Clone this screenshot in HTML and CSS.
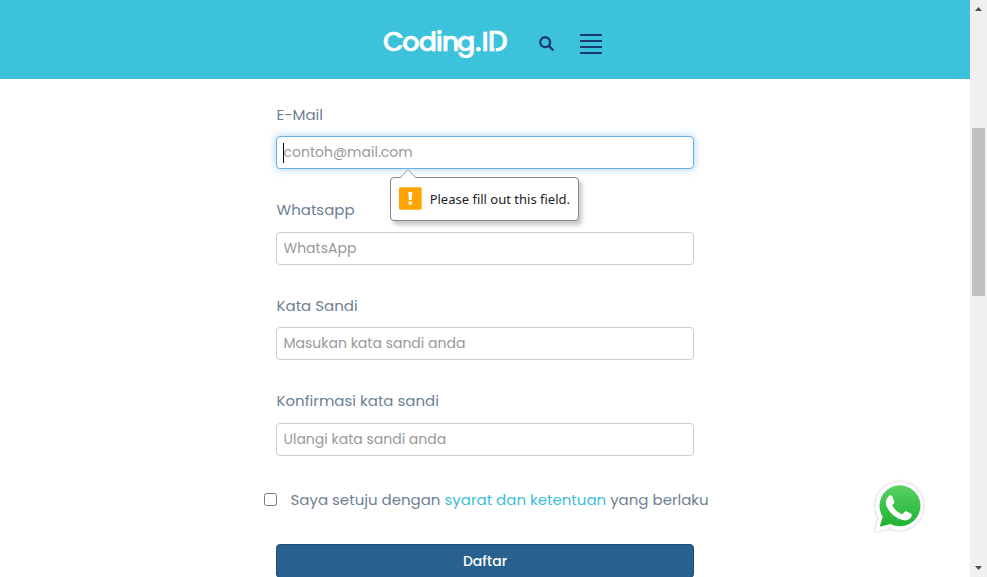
FILE: index.html
```html
<!DOCTYPE html>
<html lang="id">
<head>
<meta charset="utf-8">
<title>Coding.ID</title>
<link rel="stylesheet" href="styles.css">
</head>
<body>
<div class="window">
  <div class="page">
    <header class="header">
      <svg class="logo" width="126" height="34" viewBox="0 0 126 34"><text x="-1 18.300 34.800 51.700 57.800 73 91 97.500 103.800" y="24.700">Coding.I<tspan class="logo-d">D</tspan></text><path class="logo-cut" d="M111 20.500v5"/></svg>
      <svg class="search" width="16" height="16" viewBox="0 0 16 16"><circle cx="6.2" cy="6.2" r="4.9"/><path d="M10 10l4.3 4.3"/></svg>
      <div class="menu"><i></i><i></i><i></i><i></i></div>
    </header>
    <form class="form">
      <div class="field">
        <label for="email">E-Mail</label>
        <div class="control">
          <input id="email" class="active" placeholder="contoh@mail.com">
          <span class="caret"></span>
          <div class="tip">
            <svg class="tip-arrow" width="18" height="10" viewBox="0 0 18 10"><path d="M1 9.500L9 1l8 8.500V10H1z" fill="#fff"/><path d="M1 8.700L9 .7l8 8" fill="none" stroke="#999"/></svg>
            <svg width="23" height="23" viewBox="0 0 23 23"><rect width="23" height="23" rx="1.500" fill="#ffa400"/><path d="M9.500 5h4l-.5 8h-3zM9.700 14.500h3.600v3.200H9.700z" fill="#fff"/></svg>
            <span class="tip-text">Please fill out this field.</span>
          </div>
        </div>
      </div>
      <div class="field">
        <label for="wa">Whatsapp</label>
        <input id="wa" placeholder="WhatsApp">
      </div>
      <div class="field">
        <label for="pass">Kata Sandi</label>
        <input id="pass" placeholder="Masukan kata sandi anda">
      </div>
      <div class="field">
        <label for="confirm">Konfirmasi kata sandi</label>
        <input id="confirm" placeholder="Ulangi kata sandi anda">
      </div>
      <div class="terms"><input type="checkbox" class="check"><span>Saya setuju dengan <a>syarat dan ketentuan</a> yang berlaku</span></div>
      <button type="button" class="submit">Daftar</button>
    </form>
    <svg class="chat" width="56" height="56" viewBox="0 0 58 58">
      <defs><linearGradient id="green" x1="0" y1="0" x2="0" y2="1"><stop offset="0" stop-color="#58d163"/><stop offset="1" stop-color="#1eb232"/></linearGradient></defs>
      <path class="chat-edge" d="M3.500 55L8 41A25 25 0 1 1 19.500 51z"/>
      <path fill="url(#green)" d="M9 49.500L12 39A21.200 21.200 0 1 1 20 46.500z"/>
      <path fill="#fff" d="M18.500 17.500c1-.8 2.700-.9 3.300.2l2.300 5.400c.4 1-.1 1.900-2.200 4.200 2.600 4.600 6.200 7.600 10.600 9.300 2.100-2.500 2.800-3.500 3.900-3.100l5.300 2.600c.9.500.3 2.800-.4 3.900-1.500 2.300-5.100 3.500-8.200 2.500-8.300-2.100-13.300-7.100-16.600-13.400-1.900-4-1.400-8.600 2-11.600z"/>
    </svg>
  </div>
  <aside class="scrollbar">
    <svg width="7" height="4" viewBox="0 0 7 4"><path d="M0 4L3.500 0 7 4z"/></svg>
    <div class="track"><div class="thumb"></div></div>
    <svg width="7" height="4" viewBox="0 0 7 4"><path d="M0 0L3.500 4 7 0z"/></svg>
  </aside>
</div>
</body>
</html>
```
FILE: styles.css
```css
* { box-sizing: border-box; }
body { margin: 0; overflow: hidden; background: #fff; font-family: Poppins, Inter, sans-serif; }
.window { display: flex; height: 577px; overflow: hidden; }
.page { flex: 1; overflow: hidden; }
.header { display: flex; align-items: flex-start; height: 79px; padding-left: 384px; background: #3dc2dc; }
.logo { margin-top: 26px; overflow: visible; }
.logo text { font: 500 27px Poppins, Lato, sans-serif; fill: #fff; stroke: #fff; stroke-width: .6; }
.logo .logo-d { font-size: 28px; }
.logo-cut { stroke: #3dc2dc; stroke-width: 1.5; }
.search { margin: 36px 0 0 29px; fill: none; stroke: #1a3b6d; stroke-width: 2.4; }
.menu { display: flex; flex-direction: column; gap: 4px; width: 22px; margin: 34px 0 0 25px; }
.menu i { height: 2px; background: #1a3b6d; }
.form { width: 418px; margin: 23.600px 0 0 276px; }
.field { height: 95.6px; }
label { display: block; height: 24px; margin-bottom: 9.400px; padding-left: .5px; color: #6c7f93; font-size: 15px; line-height: 24px; }
.control { position: relative; }
.field input { display: block; width: 418px; height: 33px; padding: 0 6px 0 6.5px; border: 1px solid #ccc; border-radius: 4px; background: #fff; font: 14px Poppins, Inter, sans-serif; outline: none; }
.field input::placeholder { color: #999; opacity: 1; }
.field .active { border-color: #66afe9; box-shadow: 0 0 8px rgba(102, 175, 233, .6); }
.caret { position: absolute; left: 7px; top: 7px; width: 1px; height: 20px; background: #000; }
.tip { position: absolute; z-index: 2; left: 114px; top: 41px; display: flex; align-items: center; gap: 8px; width: 189px; height: 44px; padding: 0 8px 1px; border: 1px solid #858585; border-radius: 4px; background: #fff; box-shadow: 3px 4px 4px rgba(0, 0, 0, .22); }
.tip-arrow { position: absolute; left: 8px; top: -9px; }
.tip-text { padding-top: 1px; color: #222; font: 13px "Noto Sans", sans-serif; white-space: nowrap; }
.terms { display: flex; align-items: center; height: 24px; margin: 3px 0 32px -12px; color: #6c7f93; font-size: 15px; white-space: nowrap; }
.check { width: 13px; height: 13px; margin: 0 13.500px 0 0; }
.terms a { color: #3dbddb; }
.submit { display: block; width: 418px; height: 34px; padding: 1px 0 0; border: 1px solid #204d74; border-radius: 4px; background: #286090; color: #fff; font: 500 14px Poppins, Inter, sans-serif; }
.chat { position: absolute; left: 871px; top: 479px; }
.chat-edge { fill: #fff; filter: drop-shadow(0 0 1.500px rgba(0, 0, 0, .25)); }
.scrollbar { display: flex; flex-direction: column; align-items: center; width: 17px; padding: 7px 0; background: #f0f0f0; fill: #505050; }
.track { flex: 1; width: 13px; padding-top: 117px; }
.thumb { height: 168px; background: #c1c1c1; }
```
